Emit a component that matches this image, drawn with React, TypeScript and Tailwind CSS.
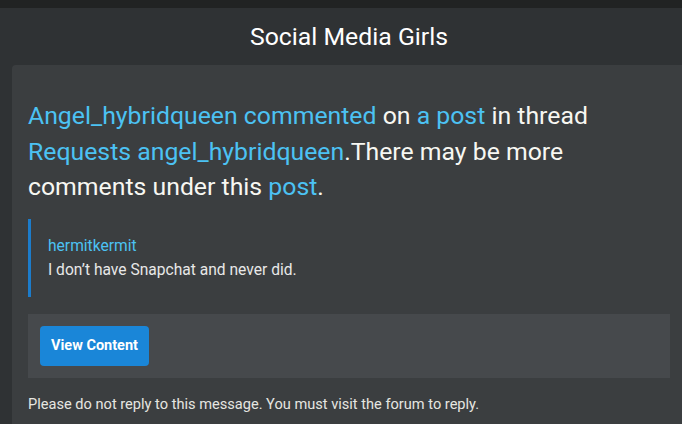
export default function App() {
  const link = "text-[#4cc2f3]";
  return (
    <div className="w-[682px] h-[424px] overflow-hidden bg-[#2f3234]" style={{ fontFamily: "Roboto, 'Noto Sans', sans-serif" }}>
      <div className="h-[8px] bg-[#212323]" />
      <div className="h-[57px] flex items-center justify-center pl-[16px] pt-[2px]">
        <div className="text-[24.8px] text-white leading-none">Social Media Girls</div>
      </div>
      <div className="ml-[12px] w-[674px] h-[400px] bg-[#3b3e40] rounded-tl-[4px] px-[16px] pt-[33px]">
        <div className="text-[24.8px] leading-[35.5px] text-[#f7f7f2]">
          <span className={link}>Angel_hybridqueen commented</span> on <span className={link}>a post</span> in thread{" "}
          <span className={link}>Requests angel_hybridqueen</span>.There may be more comments under this{" "}
          <span className={link}>post</span>.
        </div>
        <div className="mt-[14px] border-l-[3px] border-[#1c7ccb] pl-[17px] py-[15px] text-[15.6px] leading-[24px]">
          <div className={link}>hermitkermit</div>
          <div className="text-[#e8e8e8]">I don’t have Snapchat and never did.</div>
        </div>
        <div className="mt-[17px] bg-[#46494c] w-[642px] h-[64px] px-[12px] flex items-center">
          <button className="h-[40px] w-[109px] rounded-[4px] bg-[#1a86d8] text-white text-[14.5px] font-bold">View Content</button>
        </div>
        <div className="mt-[16px] text-[14.6px] text-[#e6e6e0]">Please do not reply to this message. You must visit the forum to reply.</div>
      </div>
    </div>
  );
}
